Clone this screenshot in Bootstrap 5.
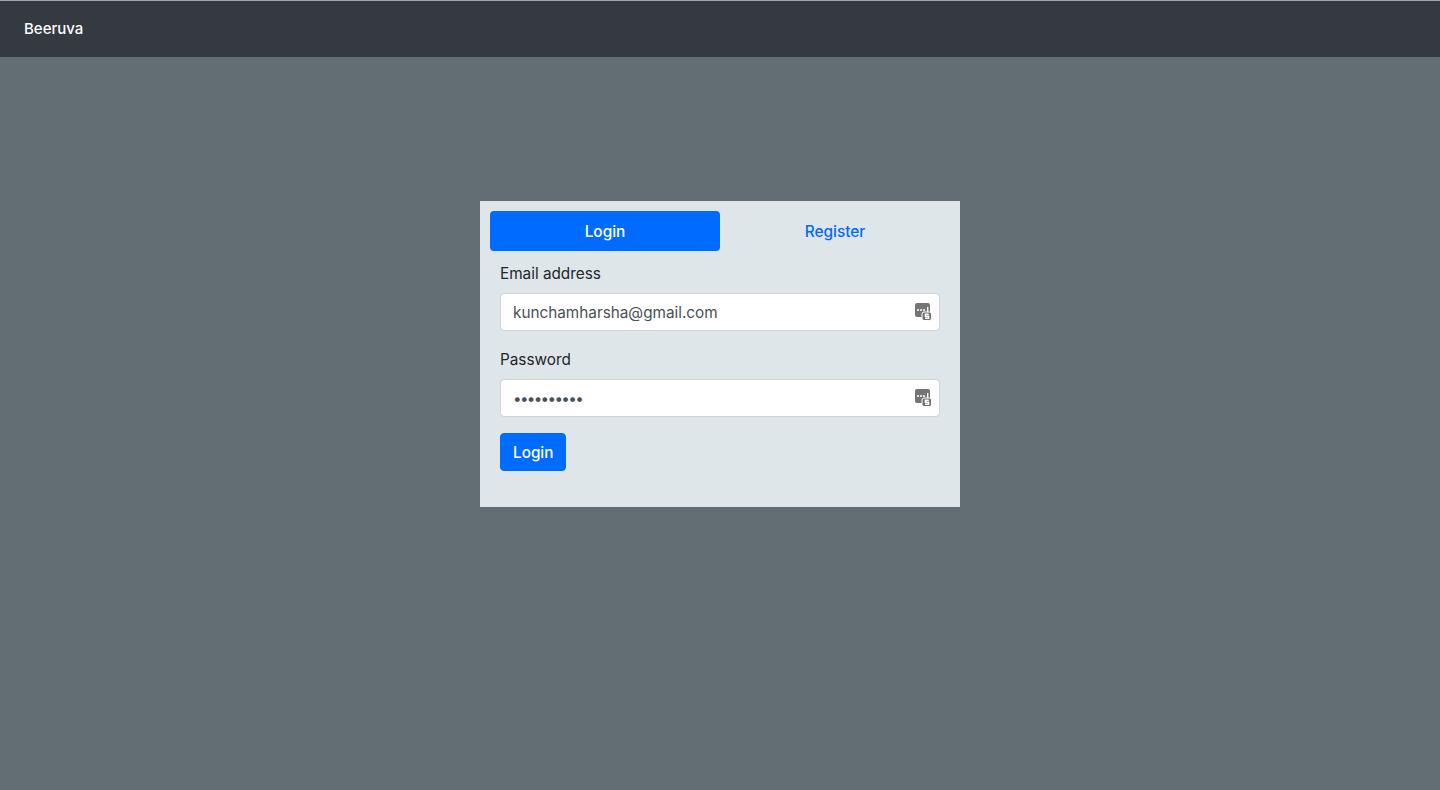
<!doctype html>
<html lang="en">
<head>
<meta charset="utf-8">
<title>Beeruva</title>
<link href="https://cdn.jsdelivr.net/npm/bootstrap@5.3.0/dist/css/bootstrap.min.css" rel="stylesheet">
<style>
html, body { height: 100%; }
body { background: #626e73; font-family: Inter, "Liberation Sans", sans-serif; color: #212529; overflow: hidden; }
.top-nav { height: 57px; background: #343a40; border-top: 1px solid #a3a6a8; padding: 0 24px; }
.top-nav .navbar-brand { color: #fff; font-size: 15px; font-weight: 500; padding: 1px 0 0; margin: 0; }
.stage { padding-top: 144px; }
.auth-box { width: 480px; height: 306px; background: #dfe6e9; padding: 10px; }
.auth-box .nav-link { height: 40px; padding: 9px 16px 7px; font-size: 15.4px; font-weight: 500; color: #006bff; line-height: 24px; border-radius: 4px; }
.auth-box .nav-link.active { background: #006bff; color: #fff; }
.auth-form { padding: 10px 10px 0; }
.auth-form .form-label { font-size: 15.3px; line-height: 24px; display: block; padding-top: 1px; margin-bottom: 7px; }
.auth-form .form-control { height: 38px; font-size: 15.3px; padding-right: 36px; color: #495057; border-color: #ced4da; border-radius: 4px; }
.auth-form .form-control[type=password] { letter-spacing: -1.7px; }
.field-wrap { position: relative; }
.key-icon { position: absolute; right: 8px; top: 10px; width: 17px; height: 18px; }
.btn-go { background: #006bff; border-color: #006bff; font-size: 15.3px; font-weight: 500; height: 38px; padding: 7px 12px 5px; border-radius: 4px; }
</style>
</head>
<body>
<nav class="navbar top-nav align-items-center">
  <a class="navbar-brand" href="#">Beeruva</a>
</nav>
<main class="stage d-flex justify-content-center">
  <div class="auth-box">
    <ul class="nav nav-pills nav-justified">
      <li class="nav-item"><a class="nav-link active" href="#">Login</a></li>
      <li class="nav-item"><a class="nav-link" href="#">Register</a></li>
    </ul>
    <form class="auth-form">
      <div class="mb-3">
        <label class="form-label" for="em">Email address</label>
        <div class="field-wrap">
          <input id="em" type="email" class="form-control" value="kunchamharsha@gmail.com">
          <svg class="key-icon" viewBox="0 0 17 18" aria-hidden="true">
            <rect x="0" y="0" width="15" height="14" rx="2" fill="#757575"/>
            <circle cx="3" cy="7" r="1" fill="#fff"/><circle cx="6" cy="7" r="1" fill="#fff"/><circle cx="9" cy="7" r="1" fill="#fff"/>
            <rect x="12" y="4" width="1.4" height="5" fill="#fff"/>
            <rect x="7" y="9" width="9.5" height="8.5" rx="2" fill="#6f6f6f" stroke="#fff" stroke-width="1"/>
            <path d="M13.8 11.2H10.4V13.3H13.6V15.3H10" fill="none" stroke="#fff" stroke-width="1.5"/>
          </svg>
        </div>
      </div>
      <div class="mb-3">
        <label class="form-label" for="pw">Password</label>
        <div class="field-wrap">
          <input id="pw" type="password" class="form-control" value="harsha1234">
          <svg class="key-icon" viewBox="0 0 17 18" aria-hidden="true">
            <rect x="0" y="0" width="15" height="14" rx="2" fill="#757575"/>
            <circle cx="3" cy="7" r="1" fill="#fff"/><circle cx="6" cy="7" r="1" fill="#fff"/><circle cx="9" cy="7" r="1" fill="#fff"/>
            <rect x="12" y="4" width="1.4" height="5" fill="#fff"/>
            <rect x="7" y="9" width="9.5" height="8.5" rx="2" fill="#6f6f6f" stroke="#fff" stroke-width="1"/>
            <path d="M13.8 11.2H10.4V13.3H13.6V15.3H10" fill="none" stroke="#fff" stroke-width="1.5"/>
          </svg>
        </div>
      </div>
      <button type="button" class="btn btn-primary btn-go">Login</button>
    </form>
  </div>
</main>
<script src="https://cdn.jsdelivr.net/npm/bootstrap@5.3.0/dist/js/bootstrap.bundle.min.js"></script>
</body>
</html>
